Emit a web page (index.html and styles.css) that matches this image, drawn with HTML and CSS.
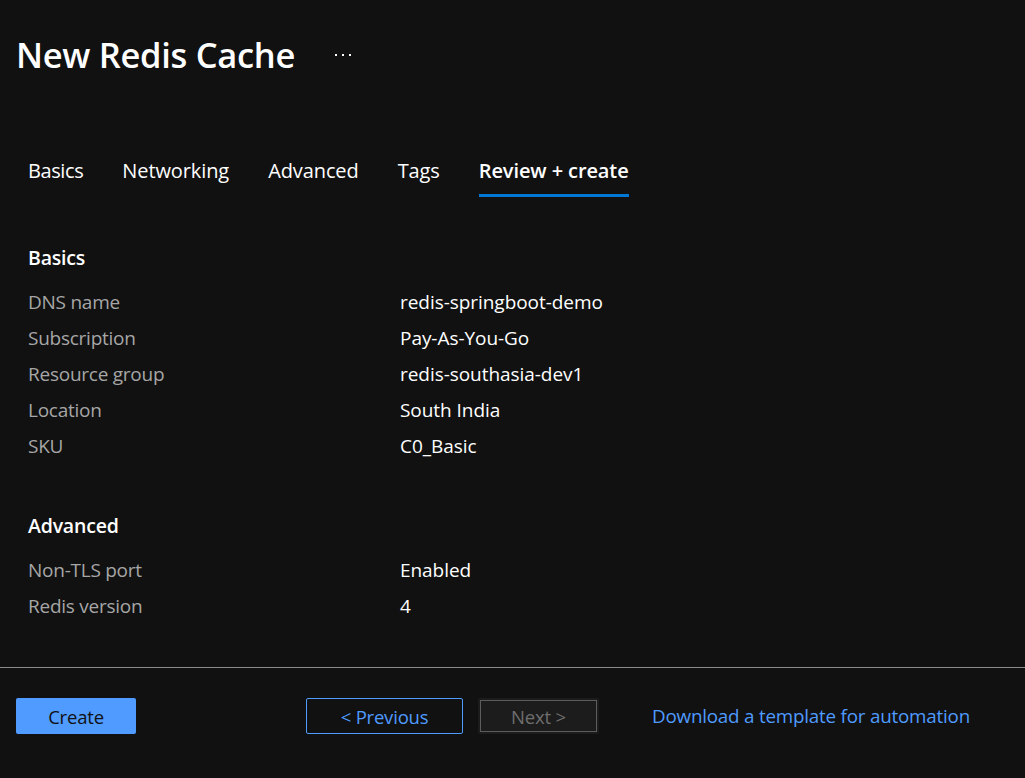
FILE: index.html
```html
<!DOCTYPE html>
<html lang="en">
<head>
<meta charset="utf-8">
<title>New Redis Cache</title>
<link rel="stylesheet" href="styles.css">
</head>
<body>
<div class="page">
  <header class="titlebar">
    <h1 class="title">New Redis Cache</h1>
    <button class="more" aria-label="More actions"><span></span><span></span><span></span></button>
  </header>

  <nav class="tabs">
    <a class="tab">Basics</a>
    <a class="tab">Networking</a>
    <a class="tab">Advanced</a>
    <a class="tab">Tags</a>
    <a class="tab active">Review + create</a>
  </nav>

  <main class="review">
    <section class="group">
      <h2 class="group-title">Basics</h2>
      <dl class="props">
        <dt>DNS name</dt><dd>redis-springboot-demo</dd>
        <dt>Subscription</dt><dd>Pay-As-You-Go</dd>
        <dt>Resource group</dt><dd>redis-southasia-dev1</dd>
        <dt>Location</dt><dd>South India</dd>
        <dt>SKU</dt><dd>C0_Basic</dd>
      </dl>
    </section>
    <section class="group group-advanced">
      <h2 class="group-title">Advanced</h2>
      <dl class="props">
        <dt>Non-TLS port</dt><dd>Enabled</dd>
        <dt>Redis version</dt><dd>4</dd>
      </dl>
    </section>
  </main>

  <footer class="actions">
    <button class="btn btn-primary">Create</button>
    <button class="btn btn-outline">&lt; Previous</button>
    <button class="btn btn-disabled" disabled><span>Next &gt;</span></button>
    <a class="link">Download a template for automation</a>
  </footer>
</div>
</body>
</html>
```

FILE: styles.css
```css
* { box-sizing: border-box; }

html, body {
  margin: 0;
  padding: 0;
  background: #111111;
}

body {
  font-family: "Open Sans", "Noto Sans", sans-serif;
  color: #ffffff;
}

.page {
  height: 778px;
  display: flex;
  flex-direction: column;
}

.titlebar {
  display: flex;
  align-items: center;
  padding: 25px 0 0 16px;
  height: 84px;
}

.title {
  margin: 0;
  font-size: 34.5px;
  font-weight: 600;
  line-height: 48px;
  letter-spacing: -0.3px;
}

.more {
  display: flex;
  gap: 5px;
  margin-left: 40px;
  padding: 0;
  border: 0;
  background: transparent;
  align-items: center;
  height: 20px;
}

.more span {
  width: 2px;
  height: 2px;
  background: #ffffff;
}

.tabs {
  display: flex;
  gap: 39px;
  padding: 74px 0 0 28px;
}

.tab {
  font-size: 20px;
  line-height: 26px;
  color: #ffffff;
  padding-bottom: 10px;
  border-bottom: 3px solid transparent;
  letter-spacing: -0.1px;
}

.tab:first-child {
  letter-spacing: -0.4px;
}

.tab.active {
  font-weight: 600;
  border-bottom-color: #0078d4;
}

.review {
  flex: 1;
  padding: 48px 0 0 28px;
}

.group-title {
  margin: 0;
  font-size: 19.5px;
  font-weight: 600;
  line-height: 26px;
  letter-spacing: -0.2px;
}

.props {
  display: grid;
  grid-template-columns: 372px auto;
  grid-auto-rows: 36px;
  align-items: center;
  margin: 13px 0 0 0;
  font-size: 19px;
}

.props dt {
  color: #a6a6a6;
  letter-spacing: -0.25px;
}

.props dd {
  margin: 0;
  color: #ffffff;
  letter-spacing: -0.05px;
}

.group-advanced {
  margin-top: 49px;
}

.actions {
  height: 111px;
  border-top: 1px solid #8a8a8a;
  display: flex;
  align-items: flex-start;
  padding: 30px 0 0 16px;
}

.btn {
  height: 36px;
  font-family: inherit;
  font-size: 18.5px;
  letter-spacing: -0.2px;
  border-radius: 2px;
  padding: 0;
  cursor: pointer;
}

.btn-primary {
  width: 120px;
  background: #4f9bff;
  border: 0;
  color: #111111;
}

.btn-outline {
  width: 157px;
  margin-left: 170px;
  background: transparent;
  border: 1px solid #4f9bff;
  color: #4f9bff;
}

.btn-disabled {
  width: 121px;
  margin-left: 15px;
  background: #1c1c1c;
  border: 0;
  padding: 2px;
  color: #6e6e6e;
  cursor: default;
}

.btn-disabled span {
  display: flex;
  align-items: center;
  justify-content: center;
  height: 100%;
  border: 1px solid #5c5c5c;
}

.link {
  margin-left: 53px;
  line-height: 36px;
  font-size: 18.8px;
  letter-spacing: -0.2px;
  color: #4f9bff;
}
```
